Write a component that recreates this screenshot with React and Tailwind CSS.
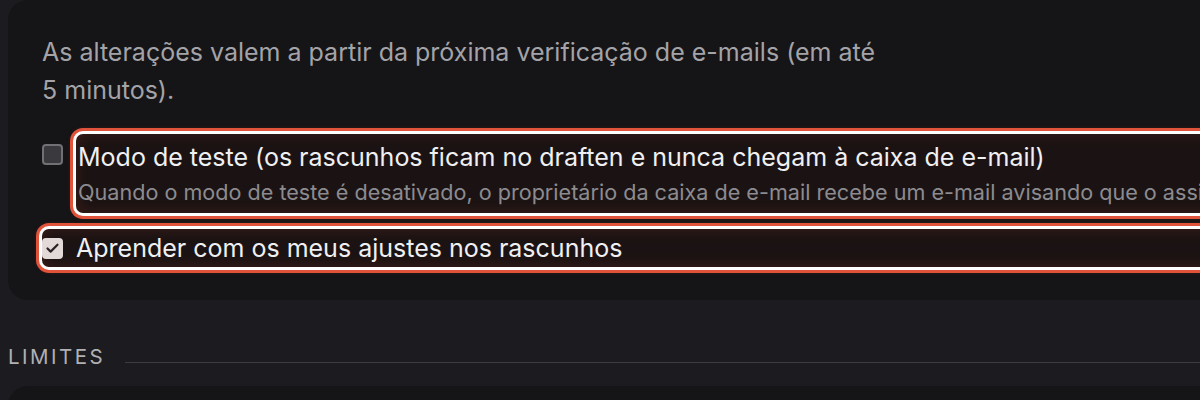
import { Check } from "lucide-react";

// Checkbox square used in the settings rows
const Box = ({ checked }) =>
  checked ? (
    <span className="flex h-[21px] w-[21px] shrink-0 items-center justify-center rounded-[4px] bg-[#e4d9d9]">
      <Check size={15} strokeWidth={3.5} className="text-[#2a2224]" />
    </span>
  ) : (
    <span className="block h-[21px] w-[21px] shrink-0 rounded-[4px] border-2 border-[#707075] bg-[#3a3a3e]" />
  );

const App = () => {
  return (
    <div className="h-[400px] w-[1200px] overflow-hidden bg-[#1c1b1f] font-['Inter','Noto_Sans',sans-serif]">
      <div className="w-[1600px] pl-2">
        {/* settings card */}
        <div className="rounded-[20px] bg-[#151417] pb-[30px] pl-[34px] pt-[33px]">
          <p className="w-[845px] text-[25px] leading-[38px] text-[#a3a3a8]">
            As alterações valem a partir da próxima verificação de e-mails (em até 5 minutos).
          </p>

          <div className="mt-[22px] flex items-start gap-[10px]">
            <div className="mt-[13px]">
              <Box />
            </div>
            <div className="rounded-[10px] border-[3px] border-white bg-[#1b1313] pb-[4px] pl-[2px] pr-4 pt-[5px] shadow-[inset_0_0_14px_rgba(228,83,58,0.18),0_0_6px_rgba(228,83,58,0.35)] ring-[3px] ring-[#e0533a]">
              <div className="text-[25px] leading-[36px] text-[#f0f0f2]">
                Modo de teste (os rascunhos ficam no draften e nunca chegam à caixa de e-mail)
              </div>
              <div className="whitespace-nowrap text-[21.6px] leading-[34px] text-[#8c8b90]">
                Quando o modo de teste é desativado, o proprietário da caixa de e-mail recebe um e-mail avisando que o assistente está ativo.
              </div>
            </div>
          </div>

          <label className="-ml-[3px] mt-[10px] flex items-center gap-[13px] rounded-[10px] border-[3px] border-white bg-[#1b1313] py-[2px] pr-4 shadow-[inset_0_0_14px_rgba(228,83,58,0.18),0_0_6px_rgba(228,83,58,0.35)] ring-[3px] ring-[#e0533a]">
            <Box checked />
            <span className="text-[25px] leading-[34px] text-[#f0f0f2]">
              Aprender com os meus ajustes nos rascunhos
            </span>
          </label>
        </div>

        {/* section heading */}
        <div className="mb-4 mt-[44px] flex items-center gap-5">
          <span className="text-[20.5px] leading-[26px] tracking-[0.12em] text-[#b0b0b5]">LIMITES</span>
          <div className="mt-[10px] h-px flex-1 bg-[#3b3b40]" />
        </div>

        <div className="h-[80px] rounded-[20px] bg-[#151417]" />
      </div>
    </div>
  );
};

export default App;
